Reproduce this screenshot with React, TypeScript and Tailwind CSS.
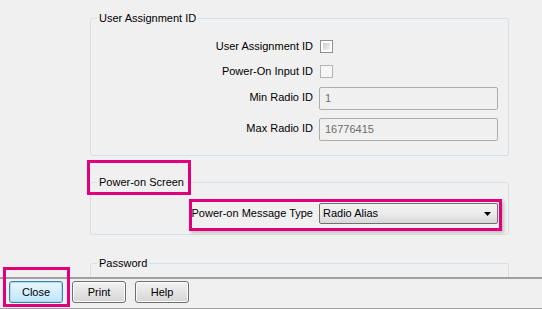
import React from 'react';

const font = { fontFamily: '"Liberation Sans", Arial, sans-serif' };

function Label({ children, className = '' }: { children: React.ReactNode; className?: string }) {
  return <div className={`w-[228px] shrink-0 pr-[6px] text-right ${className}`}>{children}</div>;
}

function Checkbox({ disabled = false }: { disabled?: boolean }) {
  return disabled ? (
    <div className="ml-[1px] h-[13px] w-[13px] border border-[#b5b5b5] bg-[#f6f6f6]" />
  ) : (
    <div className="ml-[1px] h-[13px] w-[13px] border border-[#8e8f8f] bg-white p-[2px]">
      <div className="h-full w-full bg-gradient-to-br from-[#cbcbcb] to-[#f4f4f4]" />
    </div>
  );
}

function TextBox({ value }: { value: string }) {
  return (
    <div className="flex h-[23px] w-[179px] items-center rounded-[2px] border border-[#adadad] bg-[#f0f0f0] px-[5px] text-[#6d6d6d]">
      {value}
    </div>
  );
}

function Button({ label, focused = false }: { label: string; focused?: boolean }) {
  return (
    <button
      className={`flex h-[22px] w-[54px] items-center justify-center rounded-[3px] border text-black ${
        focused
          ? 'border-[#3c7fb1] bg-gradient-to-b from-[#eaf6fd] to-[#bee6fd] shadow-[inset_0_0_0_1px_#a9dcf6]'
          : 'border-[#707070] bg-gradient-to-b from-[#f2f2f2] to-[#d6d6d6] shadow-[inset_0_0_0_1px_#fbfbfb]'
      }`}
    >
      {label}
    </button>
  );
}

export default function App() {
  return (
    <div className="relative flex h-[309px] w-[542px] flex-col bg-[#f0f0f0] text-[11px] text-black" style={font}>
      {/* scrolling form area */}
      <div className="h-[277px] overflow-hidden pl-[90px]">
        <fieldset className="mt-[11px] w-[419px] rounded-[3px] border border-[#d5dfe5] pb-[14px]">
          <legend className="ml-[6px] px-[2px] leading-[14px]">User Assignment ID</legend>
          <div className="flex flex-col">
            <div className="mt-[15px] flex h-[13px] items-center">
              <Label>User Assignment ID</Label>
              <Checkbox />
            </div>
            <div className="mt-[12px] flex h-[13px] items-center">
              <Label>Power-On Input ID</Label>
              <Checkbox disabled />
            </div>
            <div className="mt-[9px] flex items-start">
              <Label className="pt-[2px]">Min Radio ID</Label>
              <TextBox value="1" />
            </div>
            <div className="mt-[8px] flex items-start">
              <Label className="pt-[2px]">Max Radio ID</Label>
              <TextBox value="16776415" />
            </div>
          </div>
        </fieldset>

        <fieldset className="mt-[19px] w-[419px] rounded-[3px] border border-[#d5dfe5] pb-[10px]">
          <legend className="ml-[6px] px-[2px] leading-[14px]">Power-on Screen</legend>
          <div className="mt-[14px] flex items-start">
            <Label className="pt-[2px]">Power-on Message Type</Label>
            <div className="flex h-[21px] w-[179px] items-center justify-between rounded-[2px] border border-[#707070] bg-gradient-to-b from-[#f2f2f2] via-[#ebebeb] to-[#d8d8d8] pl-[3px] pr-[6px]">
              <span>Radio Alias</span>
              <svg width="7" height="4" viewBox="0 0 7 4">
                <path d="M0 0h7L3.5 4z" fill="#000" />
              </svg>
            </div>
          </div>
        </fieldset>

        <fieldset className="mt-[21px] h-[60px] w-[419px] rounded-[3px] border border-[#d5dfe5]">
          <legend className="ml-[6px] px-[2px] leading-[14px]">Password</legend>
        </fieldset>
      </div>

      {/* button bar */}
      <div className="flex flex-1 gap-[9px] border-t-2 border-t-[#a0a0a0] pl-[9px] pt-[2px]">
        <Button label="Close" focused />
        <Button label="Print" />
        <Button label="Help" />
      </div>
      <div className="h-[1px] bg-[#a0a0a0]" />

      {/* annotation highlights */}
      <div className="pointer-events-none absolute left-[87px] top-[160px] h-[35px] w-[104px] border-[3px] border-[#e2007a]" />
      <div className="pointer-events-none absolute left-[189px] top-[199px] h-[32px] w-[313px] border-[3px] border-[#e2007a] shadow-[2px_2px_3px_rgba(0,0,0,0.2)]" />
      <div className="pointer-events-none absolute left-[3px] top-[267px] h-[40px] w-[67px] border-[3px] border-[#e2007a]" />
    </div>
  );
}
